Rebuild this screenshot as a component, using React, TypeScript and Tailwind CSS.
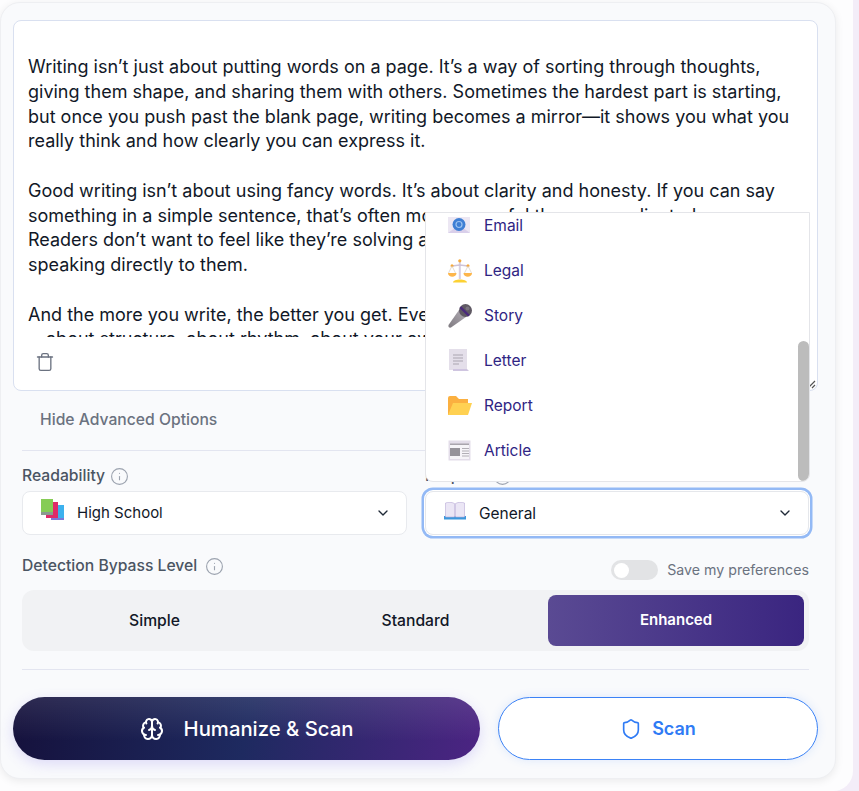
import { Brain, ChevronDown, Info, Shield, Trash } from 'lucide-react';
import type { ReactNode } from 'react';

const EmailIcon = () => (
  <svg width="23" height="17" viewBox="0 0 23 17">
    <rect x="0" y="0" width="22" height="16" fill="#ece7f3" />
    <path d="M0 16 L11 8 L22 16 Z" fill="#d9cfea" />
    <circle cx="11" cy="7.5" r="6.5" fill="#3f7fd4" />
    <circle cx="11" cy="7.5" r="3" fill="none" stroke="#9cc3f0" strokeWidth="1.2" />
  </svg>
);

const LegalIcon = () => (
  <svg width="24" height="24" viewBox="0 0 24 24">
    <rect x="10.8" y="2" width="2" height="18" fill="#d8cfe0" />
    <circle cx="11.8" cy="1.8" r="1.6" fill="#f6a93a" />
    <path d="M4 7 L11.8 6 L20 7" stroke="#cfc3d6" strokeWidth="1.6" fill="none" />
    <circle cx="4" cy="6.8" r="1.5" fill="#f6a93a" />
    <circle cx="20" cy="6.8" r="1.5" fill="#f6a93a" />
    <path d="M4 7 L0.5 14 M4 7 L7.5 14 M20 7 L16.5 14 M20 7 L23.5 14" stroke="#d9cdbf" strokeWidth="0.7" fill="none" />
    <path d="M0 14 H8.5 C8.5 19 0 19 0 14 Z" fill="#fdb64a" />
    <path d="M15.5 14 H24 C24 19 15.5 19 15.5 14 Z" fill="#fdb64a" />
    <path d="M5 23.5 C5 19.5 19 19.5 19 23.5 Z" fill="#fcd133" />
  </svg>
);

const MicIcon = () => (
  <svg width="24" height="24" viewBox="0 0 24 24">
    <defs>
      <linearGradient id="mic-handle" x1="0" y1="1" x2="1" y2="0">
        <stop offset="0" stopColor="#7e7a80" />
        <stop offset="1" stopColor="#b3aeb6" />
      </linearGradient>
    </defs>
    <path d="M11 6 L18 13 L3 23.5 Q1.5 24 0.7 23 Q0 22 0.7 20.8 Z" fill="url(#mic-handle)" />
    <circle cx="17.5" cy="6.5" r="6.5" fill="#5f5963" />
    <path d="M11.5 4 L20 12.5 L21.8 11 L13.2 2.2 Z" fill="#4b2a7c" />
    <circle cx="19.5" cy="4.5" r="2" fill="#7a747e" />
  </svg>
);

const LetterIcon = () => (
  <svg width="22" height="24" viewBox="0 0 22 24">
    <rect x="1" y="0" width="18" height="21" fill="#e4dfea" />
    <path d="M5 22 H21 L19 20 H5 Z" fill="#cfc5e0" />
    <path d="M5 6 H15 M5 9 H15 M5 12 H15 M5 15 H11" stroke="#aaa5b0" strokeWidth="1" />
  </svg>
);

const FolderIcon = () => (
  <svg width="24" height="20" viewBox="0 0 24 20">
    <path d="M0 2 Q0 0 2 0 H8 L11 3 H20 V19 H0 Z" fill="#fbb040" />
    <path d="M5 7 H24 L20 19 H0 Z" fill="#ffd152" />
  </svg>
);

const ArticleIcon = () => (
  <svg width="24" height="21" viewBox="0 0 24 21">
    <rect x="0.5" y="0.5" width="22" height="20" fill="#e3dde9" />
    <rect x="2" y="4" width="19" height="15" fill="#f6f4f8" />
    <rect x="2" y="3.5" width="19" height="1.5" fill="#a9a5ad" />
    <rect x="2" y="8" width="10" height="8" fill="#96939a" />
    <path d="M14 8.5 H21 M14 11 H21 M14 13.5 H21 M14 16 H21" stroke="#aaa7ae" strokeWidth="0.9" />
  </svg>
);

const BookIcon = () => (
  <svg width="22" height="18" viewBox="0 0 22 18">
    <rect x="0" y="14" width="22" height="3.5" fill="#3d97dc" />
    <path d="M1.5 1 C4 0 8 0 10.5 1.5 V15 H1.5 Z" fill="#ebe6f5" stroke="#b9abd6" strokeWidth="0.6" />
    <path d="M20.5 1 C18 0 14 0 11.5 1.5 V15 H20.5 Z" fill="#ebe6f5" stroke="#b9abd6" strokeWidth="0.6" />
  </svg>
);

const BooksIcon = () => (
  <svg width="23" height="21" viewBox="0 0 23 21">
    <rect x="10" y="7" width="13" height="14" fill="#7c78d8" />
    <rect x="12" y="6" width="11" height="13" fill="#3cb1ee" />
    <rect x="5" y="3" width="12" height="16" fill="#e02a68" />
    <rect x="0" y="0" width="12" height="14" fill="#86cc55" />
    <rect x="0" y="13" width="12" height="3" fill="#8a9a8f" />
  </svg>
);

const options: { label: string; icon: ReactNode }[] = [
  { label: 'Email', icon: <EmailIcon /> },
  { label: 'Legal', icon: <LegalIcon /> },
  { label: 'Story', icon: <MicIcon /> },
  { label: 'Letter', icon: <LetterIcon /> },
  { label: 'Report', icon: <FolderIcon /> },
  { label: 'Article', icon: <ArticleIcon /> },
];

export default function App() {
  return (
    <div className="h-[791px] w-[859px] overflow-hidden bg-[#f3edf8] font-['Inter',sans-serif]">
      <div className="h-[791px] w-[853px] rounded-br-[20px] bg-[#fdfdfe] pt-[2px]">
        <div className="relative h-[777px] w-[836px] rounded-[20px] border border-[#eeeff2] bg-[#f9fafc] px-[12px] pt-[17px] shadow-[0_2px_8px_rgba(0,0,0,0.08)]">
          <div className="relative h-[371px] w-[805px] overflow-hidden rounded-lg border border-[#d9e0f0] bg-white">
            <div className="h-[316px] overflow-hidden pl-[14px] pr-[17px] pt-[34px] text-[18px] leading-snug text-[#111827]">
              <p>Writing isn’t just about putting words on a page. It’s a way of sorting through thoughts, giving them shape, and sharing them with others. Sometimes the hardest part is starting, but once you push past the blank page, writing becomes a mirror—it shows you what you really think and how clearly you can express it.</p>
              <p className="mt-[24.75px]">Good writing isn’t about using fancy words. It’s about clarity and honesty. If you can say something in a simple sentence, that’s often more powerful than a complicated one. Readers don’t want to feel like they’re solving a puzzle when they read. They want you<br />speaking directly to them.</p>
              <p className="mt-[24.75px]">And the more you write, the better you get. Every page teaches you something new<br />—about structure, about rhythm, about your own voice and what you want to say.</p>
            </div>
            <div className="flex h-[50px] items-center pl-[21px] text-[#6b7280]">
              <Trash size={20} strokeWidth={1.6} />
            </div>
            <svg className="absolute bottom-0 right-0" width="10" height="10" viewBox="0 0 10 10">
              <path d="M1 8 L8 1 M5 8 L8 5" stroke="#555" strokeWidth="1.2" />
            </svg>
          </div>

          <div className="ml-[9px] w-[787px]">
            <div className="flex h-[60px] items-center border-b border-[#e3e5f0] pb-[2px] pl-[18px] text-[15.7px] font-medium text-[#6b7280]">
              Hide Advanced Options
            </div>

            <div className="mt-[14px] flex">
              <div className="w-[385px]">
                <div className="flex h-[20px] items-center gap-[5px] pt-[2px] text-[15.7px] font-medium text-[#4b5563]">
                  Readability
                  <Info size={19} strokeWidth={1.4} className="text-[#9ca3af]" />
                </div>
                <div className="mt-[6px] flex h-[44px] items-center justify-between rounded-lg border border-[#e8eaee] bg-white pl-[18px] pr-[15px]">
                  <div className="flex items-center gap-[13px] text-[15px] text-[#111827]">
                    <span className="-mt-[7px]"><BooksIcon /></span>
                    <span className="pt-[1px]">High School</span>
                  </div>
                  <ChevronDown size={16} className="text-[#1f2937]" />
                </div>
              </div>
              <div className="ml-[18px] w-[384px]">
                <div className="flex h-[20px] items-center gap-[5px] pt-[2px] text-[15.7px] font-medium text-[#4b5563]">
                  Purpose
                  <Info size={19} strokeWidth={1.4} className="text-[#9ca3af]" />
                </div>
                <div className="mt-[6px] flex h-[44px] items-center justify-between rounded-lg border border-[#e5e7eb] bg-white pl-[18px] pr-[15px] shadow-[0_0_0_1px_#fff,0_0_0_3.5px_#93b9f5]">
                  <div className="flex items-center gap-[13px] text-[15.5px] text-[#111827]">
                    <span className="-mt-[4px]"><BookIcon /></span>
                    <span className="pt-[1px]">General</span>
                  </div>
                  <ChevronDown size={16} className="text-[#1f2937]" />
                </div>
              </div>
            </div>

            <div className="mt-[20px] flex h-[20px] items-center justify-between">
              <div className="flex items-center gap-[8px] pt-[2px] text-[15.7px] font-medium text-[#4b5563]">
                Detection Bypass Level
                <Info size={19} strokeWidth={1.4} className="text-[#9ca3af]" />
              </div>
              <div className="flex translate-y-[5px] items-center gap-[9px] text-[14.2px] text-[#6b7280]">
                <div className="flex h-[20px] w-[47px] items-center rounded-full bg-[#e2e3e5] pl-[3px]">
                  <div className="h-[15px] w-[15px] rounded-full bg-white" />
                </div>
                Save my preferences
              </div>
            </div>

            <div className="mt-[15px] flex h-[61px] items-center rounded-xl bg-[#f1f2f4] px-[4px] text-[15.7px] font-medium text-[#111827]">
              <div className="w-[257px] text-center">Simple</div>
              <div className="w-[265px] text-center">Standard</div>
              <div className="flex h-[51px] w-[256px] items-center justify-center rounded-lg bg-[linear-gradient(90deg,#5a4a93,#3a2580)] text-[15px] font-semibold text-white">Enhanced</div>
            </div>

            <div className="mt-[18px] border-t border-[#e3e5f0]" />
          </div>

          <div className="mt-[27px] flex gap-[18px]">
            <button type="button" className="flex h-[63px] w-[467px] items-center justify-center gap-[20px] rounded-full bg-[linear-gradient(180deg,rgba(255,255,255,0.1),rgba(255,255,255,0)_70%),linear-gradient(100deg,#15113c,#1e2a60_50%,#4c2483)] text-[20.3px] font-medium text-white shadow-[0_4px_14px_rgba(110,90,230,0.2)]">
              <Brain size={24} strokeWidth={2} />
              <span className="pt-[1px]">Humanize &amp; Scan</span>
            </button>
            <button type="button" className="flex h-[63px] w-[320px] items-center justify-center gap-[10px] rounded-full border border-[#3b82f6] bg-white text-[18px] font-semibold text-[#2f7bf5] shadow-[0_0_10px_rgba(59,130,246,0.15)]">
              <Shield size={22} strokeWidth={1.8} />
              Scan
            </button>
          </div>

          {/* open select menu */}
          <div className="absolute left-[424px] top-[209px] h-[270px] w-[385px] overflow-hidden rounded-b-lg border border-[#e4e5e9] bg-white text-[15.5px] text-[#2f2483]">
            <div className="-mt-[10px]">
              {options.map((o) => (
                <div key={o.label} className="flex h-[45px] items-center pl-[22px]">
                  <span className="flex w-[36px] items-center">{o.icon}</span>
                  {o.label}
                </div>
              ))}
            </div>
            <div className="absolute bottom-0 right-0 h-[140px] w-[11px] rounded-full bg-[#bcbcbc]" />
          </div>
        </div>
      </div>
    </div>
  );
}
